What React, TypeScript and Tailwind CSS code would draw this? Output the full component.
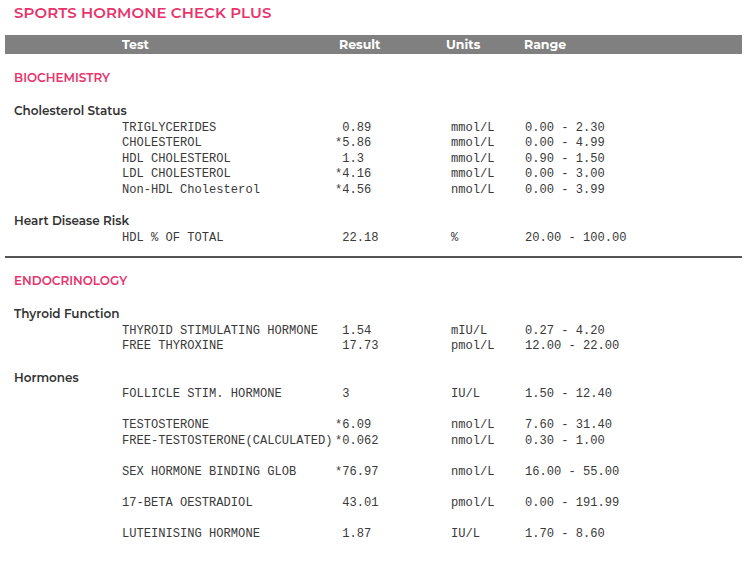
import React from "react";

type Row = { test: string; result: string; units: string; range: string } | null;

interface Group {
  title: string;
  rows: Row[];
}

interface Section {
  name: string;
  groups: Group[];
}

const sections: Section[] = [
  {
    name: "BIOCHEMISTRY",
    groups: [
      {
        title: "Cholesterol Status",
        rows: [
          { test: "TRIGLYCERIDES", result: " 0.89", units: "mmol/L", range: "0.00 - 2.30" },
          { test: "CHOLESTEROL", result: "*5.86", units: "mmol/L", range: "0.00 - 4.99" },
          { test: "HDL CHOLESTEROL", result: " 1.3", units: "mmol/L", range: "0.90 - 1.50" },
          { test: "LDL CHOLESTEROL", result: "*4.16", units: "mmol/L", range: "0.00 - 3.00" },
          { test: "Non-HDL Cholesterol", result: "*4.56", units: "nmol/L", range: "0.00 - 3.99" },
        ],
      },
      {
        title: "Heart Disease Risk",
        rows: [{ test: "HDL % OF TOTAL", result: " 22.18", units: "%", range: "20.00 - 100.00" }],
      },
    ],
  },
  {
    name: "ENDOCRINOLOGY",
    groups: [
      {
        title: "Thyroid Function",
        rows: [
          { test: "THYROID STIMULATING HORMONE", result: " 1.54", units: "mIU/L", range: "0.27 - 4.20" },
          { test: "FREE THYROXINE", result: " 17.73", units: "pmol/L", range: "12.00 - 22.00" },
        ],
      },
      {
        title: "Hormones",
        rows: [
          { test: "FOLLICLE STIM. HORMONE", result: " 3", units: "IU/L", range: "1.50 - 12.40" },
          null,
          { test: "TESTOSTERONE", result: "*6.09", units: "nmol/L", range: "7.60 - 31.40" },
          { test: "FREE-TESTOSTERONE(CALCULATED)", result: "*0.062", units: "nmol/L", range: "0.30 - 1.00" },
          null,
          { test: "SEX HORMONE BINDING GLOB", result: "*76.97", units: "nmol/L", range: "16.00 - 55.00" },
          null,
          { test: "17-BETA OESTRADIOL", result: " 43.01", units: "pmol/L", range: "0.00 - 191.99" },
          null,
          { test: "LUTEINISING HORMONE", result: " 1.87", units: "IU/L", range: "1.70 - 8.60" },
        ],
      },
    ],
  },
];

const sansFont = "font-['Montserrat','Inter','Open_Sans',sans-serif]";
const monoFont = "font-['Courier_New','Liberation_Mono',monospace]";

function DataRow({ row }: { row: Row }) {
  if (!row) return <div className="h-[15.5px]" />;
  return (
    <div className={`flex h-[15.5px] items-center whitespace-pre pl-[122px] text-[12.1px] leading-[15.5px] text-[#3a3a3a] ${monoFont}`}>
      <span className="w-[213px] shrink-0">{row.test}</span>
      <span className="w-[116px] shrink-0">{row.result}</span>
      <span className="w-[74px] shrink-0">{row.units}</span>
      <span>{row.range}</span>
    </div>
  );
}

export default function App() {
  return (
    <div className={`relative h-[562px] w-[753px] overflow-hidden bg-white ${sansFont}`}>
      {/* Title */}
      <div className="h-[35px] px-[14px] pt-[3px]">
        <h1 className="text-[15px] font-semibold leading-[20px] tracking-[0.1px] text-[#e8336b]">
          SPORTS HORMONE CHECK PLUS
        </h1>
      </div>

      {/* Column header bar */}
      <div className="ml-[5px] flex h-[19px] w-[737px] items-center bg-[#808080] pl-[117px] pt-[2px] text-[12.5px] font-bold text-white">
        <span className="w-[217px] shrink-0">Test</span>
        <span className="w-[107px] shrink-0">Result</span>
        <span className="w-[78px] shrink-0">Units</span>
        <span>Range</span>
      </div>

      {sections.map((section, i) => (
        <div key={section.name}>
          {i > 0 && <div className="ml-[5px] mt-[10px] h-[2px] w-[737px] bg-[#555555]" />}
          <div className={`px-[14px] text-[12px] font-semibold leading-[16px] text-[#e8336b] ${i === 0 ? "mt-[16px]" : "mt-[15px]"}`}>
            {section.name}
          </div>
          {section.groups.map((group, gi) => (
            <div key={group.title} className={gi === 0 ? "mt-[17px]" : "mt-[15px]"}>
              <div className="px-[14px] pb-[1.5px] text-[12px] font-semibold leading-[16px] text-[#333]">
                {group.title}
              </div>
              {group.rows.map((row, ri) => (
                <DataRow key={ri} row={row} />
              ))}
            </div>
          ))}
        </div>
      ))}
    </div>
  );
}
